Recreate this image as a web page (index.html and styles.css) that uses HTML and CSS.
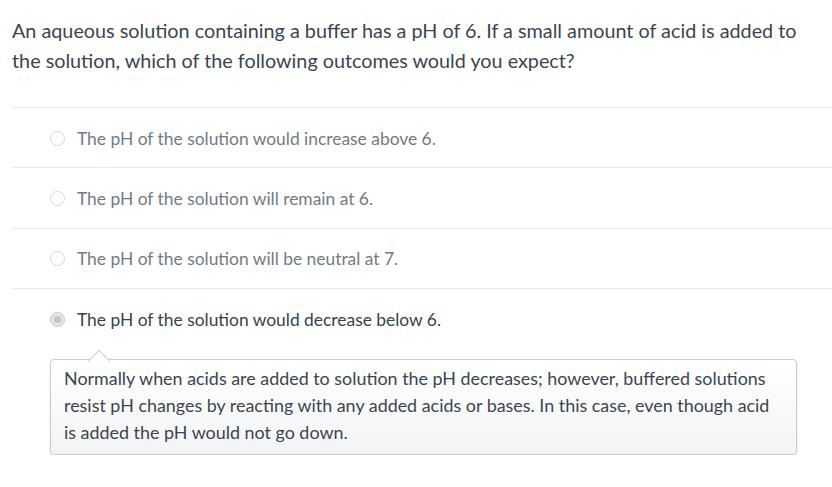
FILE: index.html
```html
<!DOCTYPE html>
<html>
<head>
<meta charset="utf-8">
<link rel="stylesheet" href="styles.css">
</head>
<body>
<div class="quiz">
  <div class="question">An aqueous solution containing a buffer has a pH of 6. If a small amount of acid is added to the solution, which of the following outcomes would you expect?</div>
  <div class="answers">
    <div class="answer">
      <span class="radio"></span>
      <span class="label">The pH of the solution would increase above 6.</span>
    </div>
    <div class="answer">
      <span class="radio"></span>
      <span class="label">The pH of the solution will remain at 6.</span>
    </div>
    <div class="answer">
      <span class="radio"></span>
      <span class="label">The pH of the solution will be neutral at 7.</span>
    </div>
    <div class="answer selected">
      <span class="radio"></span>
      <span class="label">The pH of the solution would decrease below 6.</span>
    </div>
    <div class="feedback">
      <span class="arrow"></span>
      Normally when acids are added to solution the pH decreases; however, buffered solutions resist pH changes by reacting with any added acids or bases. In this case, even though acid is added the pH would not go down.
    </div>
  </div>
</div>
</body>
</html>
```
FILE: styles.css
```css
html, body {
  margin: 0;
  padding: 0;
  background: #fff;
}
body {
  font-family: Lato, "Open Sans", sans-serif;
  color: #2d3b45;
}
.quiz {
  padding: 15px 0 0 12px;
}
.question {
  font-size: 19.8px;
  line-height: 30px;
  padding-right: 14px;
  color: #3a464f;
}
.answers {
  margin-top: 32px;
}
.answer {
  box-sizing: border-box;
  display: flex;
  align-items: center;
  height: 60.4px;
  border-top: 1px solid #e8eaec;
  padding-left: 38px;
  padding-top: 1px;
  font-size: 17.4px;
  color: #707c85;
}
.radio {
  box-sizing: border-box;
  width: 15px;
  height: 15px;
  border-radius: 50%;
  border: 1px solid #d2d6d9;
  background: #fff;
  margin-right: 12px;
  position: relative;
  flex: none;
}
.selected {
  color: #36434c;
}
.selected .radio {
  border: 1px solid #c4c8cb;
  background: #e3e5e7;
}
.selected .radio::after {
  content: "";
  position: absolute;
  left: 3px;
  top: 3px;
  width: 7px;
  height: 7px;
  border-radius: 50%;
  background: #c2c6c9;
}
.feedback {
  position: relative;
  margin: 10px 35px 0 38px;
  box-sizing: border-box;
  padding: 5px 18px 8px 13px;
  border: 1px solid #c7cdd1;
  border-radius: 4px;
  background: linear-gradient(#ffffff, #f3f4f6);
  box-shadow: 0 1px 2px rgba(0,0,0,0.12);
  font-size: 17.9px;
  line-height: 27px;
  color: #3a464f;
}
.arrow {
  position: absolute;
  left: 40px;
  top: -7px;
  width: 16px;
  height: 16px;
  transform: rotate(45deg);
  background: #fff;
  border-left: 1px solid #c7cdd1;
  border-top: 1px solid #c7cdd1;
  box-sizing: border-box;
}
```
